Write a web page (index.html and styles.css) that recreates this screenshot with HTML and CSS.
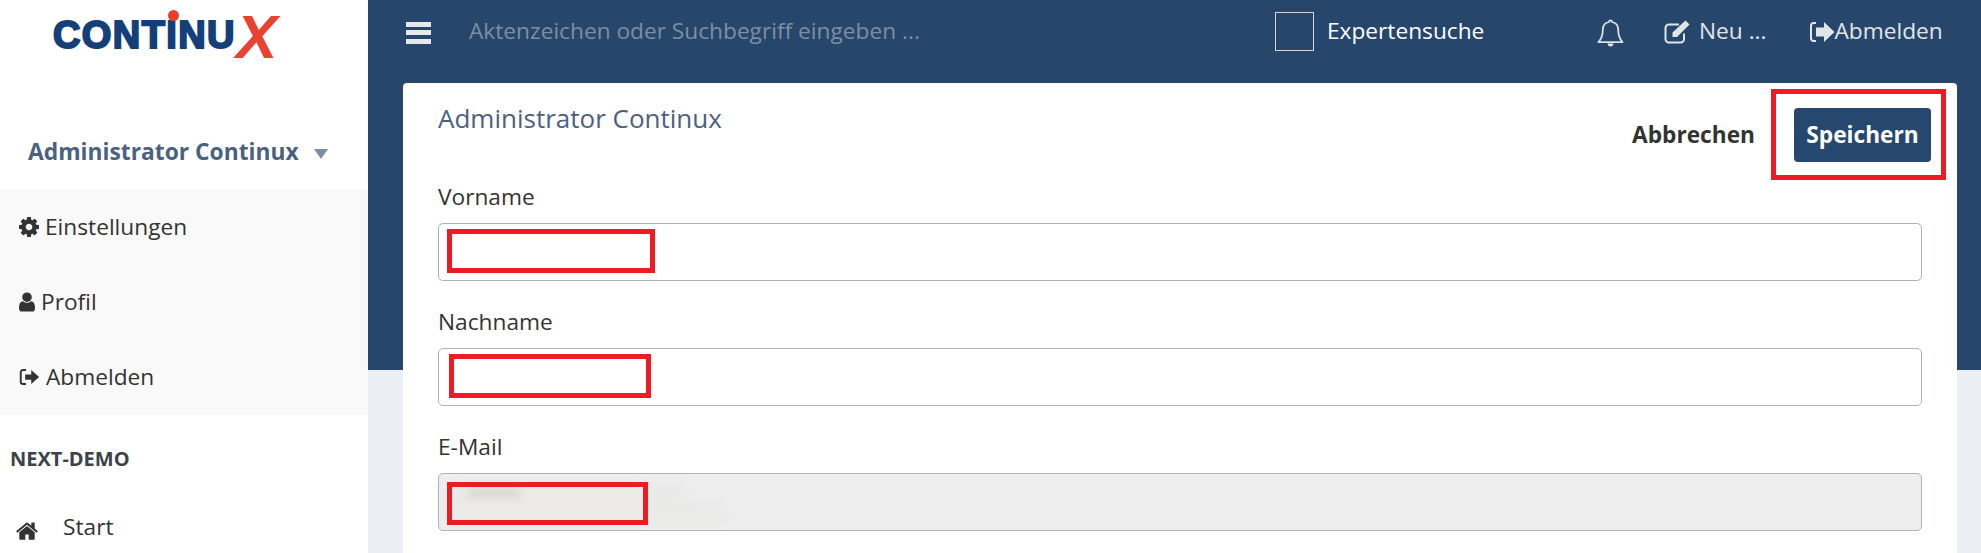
FILE: index.html
```html
<!DOCTYPE html>
<html lang="de">
<head>
  <meta charset="UTF-8" />
  <title>Continux Profil</title>
  <link rel="stylesheet" href="styles.css">
</head>
<body>
  <aside class="sidebar">
    <div class="logo">
      <span class="logo-text">CONT<span class="logo-i">I<span class="logo-dot"></span></span>NU</span><span class="logo-x">X</span>
    </div>

    <div class="user-toggle">
      <span>Administrator Continux</span>
      <span class="caret"></span>
    </div>

    <ul class="user-menu">
      <li>
        <svg class="icon icon-cog" viewBox="128 128 1536 1536"><path d="M1152 896q0-106-75-181t-181-75-181 75-75 181 75 181 181 75 181-75 75-181zm512-109v222q0 12-8 23t-20 13l-185 28q-19 54-39 91 35 50 107 138 10 12 10 25t-9 23q-27 37-99 108t-94 71q-12 0-26-9l-138-108q-44 23-91 38-16 136-29 186-7 28-36 28h-222q-14 0-24.500-8.500t-11.500-21.500l-28-184q-49-16-90-37l-141 107q-10 9-25 9-14 0-25-11-126-114-165-168-7-10-7-23 0-12 8-23 15-21 51-66.500t54-70.500q-27-50-41-99l-183-27q-13-2-21-12.500t-8-23.500v-222q0-12 8-23t19-13l186-28q14-46 39-92-40-57-107-138-10-12-10-24 0-10 9-23 26-36 98.500-107.500t94.500-71.500q13 0 26 10l138 107q44-23 91-38 16-136 29-186 7-28 36-28h222q14 0 24.500 8.500t11.500 21.500l28 184q49 16 90 37l142-107q9-9 24-9 13 0 25 10 129 119 165 170 7 8 7 22 0 12-8 23-15 21-51 66.500t-54 70.500q26 50 41 98l183 28q13 2 21 12.500t8 23.500z"/></svg>
        Einstellungen
      </li>
      <li>
        <svg class="icon icon-user" viewBox="256 128 1280 1536"><path d="M1536 1399q0 109-62.500 187t-150.500 78h-854q-88 0-150.500-78t-62.500-187q0-85 8.500-160.500t31.500-152 58.500-131 94-89 134.500-34.500q131 128 313 128t313-128q76 0 134.500 34.500t94 89 58.500 131 31.500 152 8.500 160.500zm-256-887q0 159-112.500 271.500t-271.500 112.500-271.500-112.500-112.500-271.500 112.500-271.500 271.500-112.500 271.500 112.500 112.500 271.500z"/></svg>
        Profil
      </li>
      <li>
        <svg class="icon icon-logout" viewBox="0 0 24 20"><path d="M8 2H4.500A2.500 2.500 0 0 0 2 4.500v11A2.500 2.500 0 0 0 4.500 18H8" fill="none" stroke="currentColor" stroke-width="2.200"/><path d="M7 7h7V2l9 8-9 8v-5H7z"/></svg>
        Abmelden
      </li>
    </ul>

    <div class="section-title">NEXT-DEMO</div>

    <div class="nav-item">
      <svg class="icon icon-home" viewBox="0 230 1792 1310"><path d="M1472 992v480q0 26-19 45t-45 19h-384v-384h-256v384h-384q-26 0-45-19t-19-45v-480q0-1 .5-3t.5-3l575-474 575 474q1 2 1 6zm223-69l-62 74q-8 9-21 11h-3q-13 0-21-7l-692-577-692 577q-12 8-24 7-13-2-21-11l-62-74q-8-10-7-23.500t11-21.500l719-599q32-26 76-26t76 26l244 204v-195q0-14 9-23t23-9h192q14 0 23 9t9 23v408l219 182q10 8 11 21.500t-7 23.500z"/></svg>
      Start
    </div>
  </aside>

  <main class="main">
    <header class="topbar">
      <div class="burger"><span></span><span></span><span></span></div>
      <div class="search">Aktenzeichen oder Suchbegriff eingeben ...</div>
      <label class="expert"><span class="check"></span>Expertensuche</label>
      <svg class="bell" viewBox="0 0 28 30"><path d="M14 2.500c1 0 1.500.7 1.500 1.600 4.500 .8 6.500 4.300 6.500 8.400 0 5 .6 8.500 4.500 12.500h-25C5.400 21 6 17.500 6 12.500c0-4.100 2-7.600 6.500-8.400 0-.9.500-1.600 1.500-1.600z" fill="none" stroke="currentColor" stroke-width="1.800" stroke-linejoin="round"/><path d="M11 26.500a3 3 0 0 0 6 0z"/></svg>
      <div class="top-link top-new">
        <svg class="icon-edit" viewBox="0 0 26 24"><path d="M20 13.500V19a3.500 3.500 0 0 1-3.500 3.500H5A3.500 3.500 0 0 1 1.500 19V8A3.500 3.500 0 0 1 5 4.500h10" fill="none" stroke="currentColor" stroke-width="2"/><path d="M21.500 .5l4 4L13 17H8.500v-4.500z"/></svg>
        Neu ...
      </div>
      <div class="top-link top-logout">
        <svg class="icon-out" viewBox="0 0 26 24"><path d="M7 3H4.500A2.500 2.500 0 0 0 2 5.500v13A2.500 2.500 0 0 0 4.500 21H7" fill="none" stroke="currentColor" stroke-width="2"/><path d="M7 7.500h8V2l10.500 10L15 22v-5.500H7z"/></svg>
        Abmelden
      </div>
    </header>

    <section class="card">
      <div class="card-head">
        <h2 class="card-title">Administrator Continux</h2>
        <div class="actions">
          <a class="btn-link">Abbrechen</a>
          <div class="save-wrap">
            <button class="btn-save">Speichern</button>
            <span class="mark mark-save"></span>
          </div>
        </div>
      </div>

      <div class="form-group">
        <label for="vorname">Vorname</label>
        <div class="field">
          <input type="text" id="vorname">
          <span class="mark mark-first"></span>
        </div>
      </div>

      <div class="form-group">
        <label for="nachname">Nachname</label>
        <div class="field">
          <input type="text" id="nachname">
          <span class="mark mark-last"></span>
        </div>
      </div>

      <div class="form-group">
        <label for="email">E-Mail</label>
        <div class="field">
          <input type="text" id="email" disabled>
          <span class="smudge smudge-a"></span>
          <span class="smudge smudge-b"></span>
          <span class="smudge smudge-d"></span>
          <span class="smudge smudge-c"></span>
          <span class="mark mark-mail"></span>
        </div>
      </div>
    </section>
  </main>
</body>
</html>
```

FILE: styles.css
```css
* {
  box-sizing: border-box;
}

html,
body {
  height: 553px;
  margin: 0;
  overflow: hidden;
}

body {
  display: flex;
  font-family: "Open Sans", sans-serif;
  font-size: 22.700px;
  color: #333;
  background: #fff;
}

/* sidebar */
.sidebar {
  width: 368px;
  flex-shrink: 0;
  background: #fff;
}

.logo {
  display: flex;
  align-items: flex-start;
  height: 112px;
  padding-left: 53px;
}

.logo-text {
  margin-top: 13px;
  font-family: "Liberation Sans", sans-serif;
  font-size: 38px;
  line-height: 45px;
  font-weight: 700;
  letter-spacing: 1.400px;
  color: #14407a;
  -webkit-text-stroke: 2px #14407a;
}

.logo-i {
  position: relative;
}

.logo-dot {
  position: absolute;
  left: 2px;
  top: -4px;
  width: 11px;
  height: 11px;
  border-radius: 50%;
  background: #e8402f;
}

.logo-x {
  margin-top: 6px;
  font-family: "Liberation Sans", sans-serif;
  font-size: 62px;
  line-height: 62px;
  font-weight: 700;
  font-style: italic;
  color: #ea4230;
}

.user-toggle {
  display: flex;
  align-items: center;
  height: 77px;
  padding: 2px 0 0 28px;
  font-size: 22.800px;
  font-weight: 700;
  color: #4a6180;
}

.caret {
  width: 0;
  height: 0;
  margin-left: 15px;
  margin-top: 4px;
  border-left: 7px solid transparent;
  border-right: 7px solid transparent;
  border-top: 10px solid #7d8da3;
}

.user-menu {
  list-style: none;
  height: 226px;
  margin: 0;
  padding: 0;
  background: #f9f9f9;
}

.user-menu li {
  display: flex;
  align-items: center;
  gap: 6px;
  height: 75px;
  padding-left: 19px;
}

.icon {
  fill: #333;
  color: #333;
  flex-shrink: 0;
}

.icon-cog {
  width: 20px;
  height: 20px;
}

.icon-user {
  width: 16px;
  height: 20px;
}

.icon-logout {
  width: 21px;
  height: 18px;
}

.section-title {
  padding: 32px 0 0 10px;
  font-size: 20px;
  line-height: 24px;
  font-weight: 700;
  color: #3c4249;
}

.nav-item {
  display: flex;
  align-items: center;
  gap: 24px;
  margin-top: 42px;
  padding-left: 15px;
  line-height: 28px;
}

.icon-home {
  width: 24px;
  height: 18px;
  margin-top: 7px;
}

/* main area */
.main {
  flex: 1;
  min-width: 0;
  background: linear-gradient(#26476b 370px, #ebeef3 370px);
}

.topbar {
  display: flex;
  align-items: center;
  height: 83px;
  padding: 0 0 23px 38px;
  color: #fff;
}

.burger {
  display: flex;
  flex-direction: column;
  gap: 3.500px;
  width: 25px;
  margin-top: 5px;
}

.burger span {
  height: 5px;
  background: #e6e8ea;
}

.search {
  width: 806px;
  margin-left: 38px;
  color: #7c8ea3;
}

.expert {
  display: flex;
  align-items: center;
  gap: 13px;
  width: 322px;
}

.check {
  width: 39px;
  height: 39px;
  margin-top: 3px;
  border: 1px solid #d5d5d5;
}

.bell {
  width: 27px;
  height: 29px;
  margin-top: 5px;
  fill: #dfe2e5;
  color: #dfe2e5;
}

.top-link {
  display: flex;
  align-items: center;
  color: #e2e5e8;
}

.top-new {
  gap: 9px;
  margin-left: 40px;
}

.icon-edit {
  width: 26px;
  height: 24px;
  margin-top: 3px;
  fill: currentColor;
}

.top-logout {
  margin-left: 42px;
}

.icon-out {
  width: 26px;
  height: 24px;
  margin-top: 3px;
  fill: currentColor;
}

.card {
  height: 470px;
  margin: 0 24px 0 35px;
  padding: 0 35px;
  background: #fff;
  border-radius: 4px 4px 0 0;
}

.card-head {
  display: flex;
  justify-content: space-between;
  align-items: flex-start;
  height: 100px;
}

.card-title {
  margin: 17px 0 0;
  font-size: 26px;
  line-height: 36px;
  font-weight: 400;
  color: #4a6180;
}

.actions {
  display: flex;
  align-items: center;
  gap: 39px;
  margin: 25px -9px 0 0;
}

.btn-link {
  padding-bottom: 2px;
  font-weight: 700;
  color: #333;
}

.save-wrap {
  position: relative;
}

.btn-save {
  display: block;
  width: 137px;
  height: 54px;
  padding: 0 0 2px;
  border: none;
  border-radius: 4px;
  font-family: inherit;
  font-size: 22.700px;
  font-weight: 700;
  color: #fff;
  background: #26486e;
}

.form-group {
  margin-bottom: 27px;
}

.form-group label {
  display: block;
  margin-bottom: 12px;
  line-height: 28px;
}

.field {
  position: relative;
}

.field input {
  display: block;
  width: 100%;
  height: 58px;
  padding: 0 12px;
  border: 1px solid #a9b5ba;
  border-radius: 5px;
  background: #fff;
}

.field input:disabled {
  background: #ededed;
}

/* red highlight boxes over the screenshot */
.mark {
  position: absolute;
  border: 5px solid #ed1c24;
}

.mark-save {
  left: -23px;
  top: -19px;
  width: 175px;
  height: 91px;
}

.mark-first {
  left: 9px;
  top: 6px;
  width: 208px;
  height: 44px;
}

.mark-last {
  left: 11px;
  top: 6px;
  width: 202px;
  height: 44px;
}

.mark-mail {
  left: 9px;
  top: 9px;
  width: 201px;
  height: 43px;
}

/* blurred-out address */
.smudge {
  position: absolute;
  filter: blur(4px);
  background: #ebeae7;
}

.smudge-a {
  left: 14px;
  top: 12px;
  width: 190px;
  height: 36px;
}

.smudge-b {
  left: 205px;
  top: 14px;
  width: 42px;
  height: 18px;
  background: #e9e9e8;
}

.smudge-d {
  left: 205px;
  top: 32px;
  width: 82px;
  height: 20px;
  background: #e9e9e8;
}

.smudge-c {
  left: 30px;
  top: 17px;
  width: 52px;
  height: 6px;
  background: #cfcdc8;
}
```
